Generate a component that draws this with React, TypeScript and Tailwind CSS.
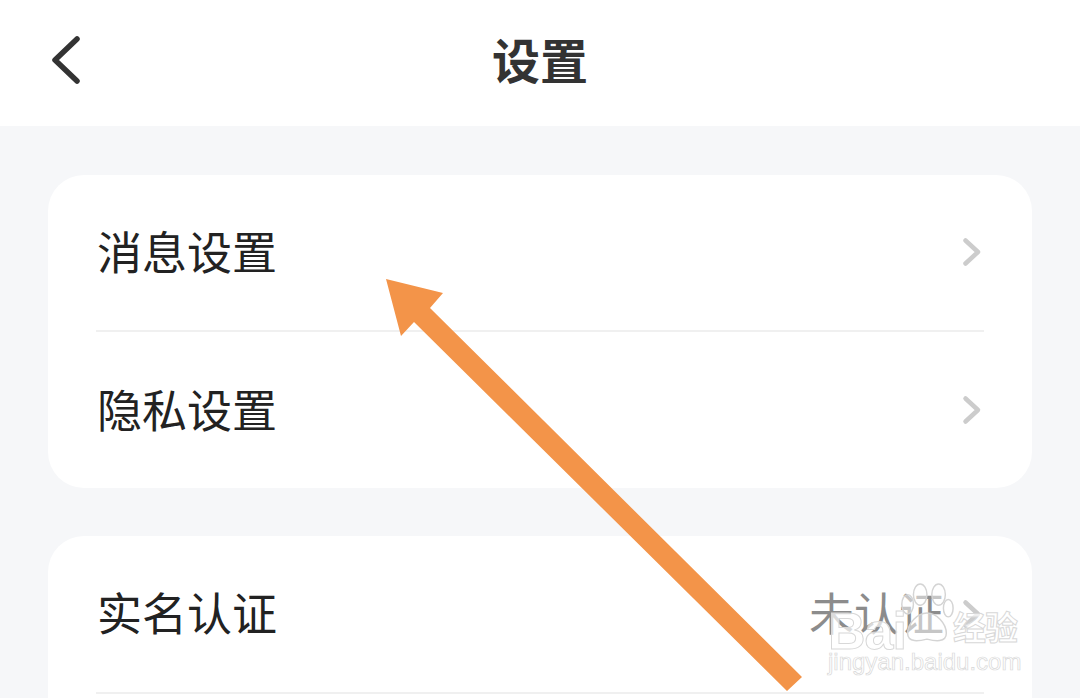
const font = { fontFamily: '"Noto Sans CJK SC", "Liberation Sans", sans-serif' }

function Chevron() {
  return (
    <svg width="20" height="30" viewBox="0 0 20 30" fill="none" className="shrink-0 -mt-[1px]">
      <path d="M3.5 3.5 L16 15 L3.5 26.5" stroke="#cccccc" strokeWidth="4.5" strokeLinecap="round" strokeLinejoin="round" />
    </svg>
  )
}

function Row({ label, value, divider, tall }: { label: string; value?: string; divider?: boolean; tall?: boolean }) {
  return (
    <div className={tall ? 'mx-12 h-[158px] flex flex-col' : 'mx-12 h-[157px] flex flex-col'}>
      <div className="flex-1 flex items-center justify-between">
        <span className="text-[45px] leading-none text-[#222222] pl-px -mt-[5px]">{label}</span>
        <div className="flex items-center gap-[18px] mr-[2px]">
          {value && <span className="text-[45px] leading-none text-[#8c8c8c] -mt-[5px]">{value}</span>}
          <Chevron />
        </div>
      </div>
      {divider && <div className="h-0.5 bg-[#f0f0f0]" />}
    </div>
  )
}

function Watermark() {
  return (
    <div className="absolute left-[826px] top-[580px] w-[200px] h-[100px] pointer-events-none">
      <div className="absolute left-[2px] top-[25px] text-[52px] leading-none font-bold text-[#ffffffb0] [-webkit-text-stroke:1px_#d8d8d8] [font-family:'Liberation_Sans',sans-serif] tracking-[-1px]">
        Bai
      </div>
      <svg className="absolute left-[70px] top-0" width="60" height="66" viewBox="0 0 62 66" fill="#ffffff80" stroke="#d4d4d4" strokeWidth="1.5">
        <ellipse cx="12" cy="24" rx="6" ry="10" />
        <ellipse cx="25" cy="14" rx="7" ry="11" />
        <ellipse cx="44" cy="14" rx="7" ry="11" />
        <ellipse cx="54" cy="28" rx="5" ry="9" />
        <path d="M32 33 C22 33 12 44 12 54 C12 64 24 62 32 60 C40 62 52 64 52 54 C52 44 42 33 32 33 Z" />
      </svg>
      <div className="absolute left-[127px] top-[30px] text-[33px] leading-none font-bold tracking-[-1px] text-[#ffffffb0] [-webkit-text-stroke:1px_#d8d8d8]">
        经验
      </div>
      <div className="absolute left-[2px] top-[70px] text-[24px] leading-none text-[#ffffffb0] [-webkit-text-stroke:0.7px_#d8d8d8] [font-family:'Liberation_Sans',sans-serif] whitespace-nowrap">
        jingyan.baidu.com
      </div>
    </div>
  )
}

export default function App() {
  return (
    <div className="relative w-[1080px] h-[698px] overflow-hidden bg-[#f6f7f9]" style={font}>
      <header className="relative h-[126px] bg-white flex items-center justify-center">
        <svg className="absolute left-[50px] top-[35px]" width="32" height="50" viewBox="0 0 32 50" fill="none">
          <path d="M27 4 L5 25 L27 46" stroke="#333333" strokeWidth="5.5" strokeLinecap="round" strokeLinejoin="round" />
        </svg>
        <h1 className="text-[48px] leading-none font-bold text-[#333333] -mt-[11px]">设置</h1>
      </header>

      <main className="px-12 pt-[49px] flex flex-col gap-12">
        <section className="bg-white rounded-[36px] h-[313px] overflow-hidden">
          <Row label="消息设置" divider />
          <Row label="隐私设置" />
        </section>
        <section className="bg-white rounded-[36px] h-[400px] overflow-hidden">
          <Row label="实名认证" value="未认证" divider tall />
        </section>
      </main>

      <Watermark />

      {/* annotation arrow drawn over the screenshot */}
      <svg className="absolute inset-0" width="1080" height="698" viewBox="0 0 1080 698">
        <polygon points="386,279 443,293 430,308 802,677 787,691 414,322 401,336" fill="#f39449" />
      </svg>
    </div>
  )
}
